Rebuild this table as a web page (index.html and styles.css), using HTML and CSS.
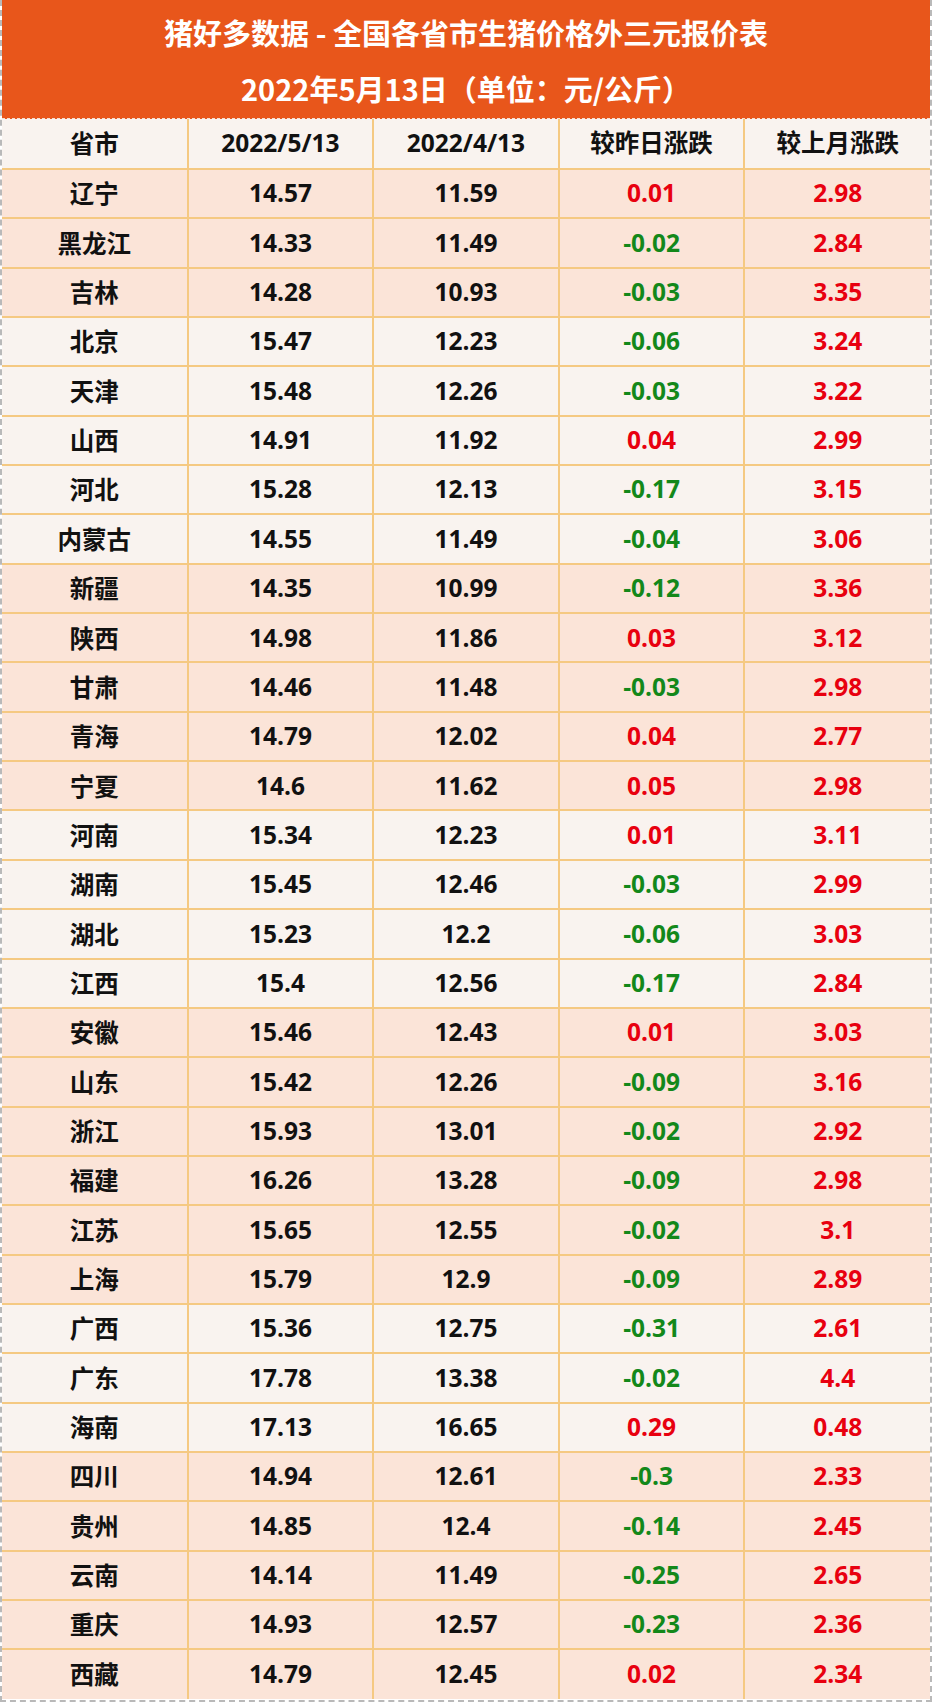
FILE: index.html
```html
<!DOCTYPE html>
<html lang="zh">
<head>
<meta charset="utf-8">
<title>猪好多数据</title>
<link rel="stylesheet" href="styles.css">
</head>
<body>
<div class="sheet">
  <div class="title">
    <div class="title-line">猪好多数据 - 全国各省市生猪价格外三元报价表</div>
    <div class="title-line">2022年5月13日（单位：元/公斤）</div>
  </div>
  <table class="grid">
    <thead>
      <tr class="head"><th>省市</th><th>2022/5/13</th><th>2022/4/13</th><th>较昨日涨跌</th><th>较上月涨跌</th></tr>
    </thead>
    <tbody>
      <tr class="pe"><td>辽宁</td><td>14.57</td><td>11.59</td><td class="up">0.01</td><td class="up">2.98</td></tr>
      <tr class="pe"><td>黑龙江</td><td>14.33</td><td>11.49</td><td class="dn">-0.02</td><td class="up">2.84</td></tr>
      <tr class="pe"><td>吉林</td><td>14.28</td><td>10.93</td><td class="dn">-0.03</td><td class="up">3.35</td></tr>
      <tr class="lt"><td>北京</td><td>15.47</td><td>12.23</td><td class="dn">-0.06</td><td class="up">3.24</td></tr>
      <tr class="lt"><td>天津</td><td>15.48</td><td>12.26</td><td class="dn">-0.03</td><td class="up">3.22</td></tr>
      <tr class="lt"><td>山西</td><td>14.91</td><td>11.92</td><td class="up">0.04</td><td class="up">2.99</td></tr>
      <tr class="lt"><td>河北</td><td>15.28</td><td>12.13</td><td class="dn">-0.17</td><td class="up">3.15</td></tr>
      <tr class="lt"><td>内蒙古</td><td>14.55</td><td>11.49</td><td class="dn">-0.04</td><td class="up">3.06</td></tr>
      <tr class="pe"><td>新疆</td><td>14.35</td><td>10.99</td><td class="dn">-0.12</td><td class="up">3.36</td></tr>
      <tr class="pe"><td>陕西</td><td>14.98</td><td>11.86</td><td class="up">0.03</td><td class="up">3.12</td></tr>
      <tr class="pe"><td>甘肃</td><td>14.46</td><td>11.48</td><td class="dn">-0.03</td><td class="up">2.98</td></tr>
      <tr class="pe"><td>青海</td><td>14.79</td><td>12.02</td><td class="up">0.04</td><td class="up">2.77</td></tr>
      <tr class="pe"><td>宁夏</td><td>14.6</td><td>11.62</td><td class="up">0.05</td><td class="up">2.98</td></tr>
      <tr class="lt"><td>河南</td><td>15.34</td><td>12.23</td><td class="up">0.01</td><td class="up">3.11</td></tr>
      <tr class="lt"><td>湖南</td><td>15.45</td><td>12.46</td><td class="dn">-0.03</td><td class="up">2.99</td></tr>
      <tr class="lt"><td>湖北</td><td>15.23</td><td>12.2</td><td class="dn">-0.06</td><td class="up">3.03</td></tr>
      <tr class="lt"><td>江西</td><td>15.4</td><td>12.56</td><td class="dn">-0.17</td><td class="up">2.84</td></tr>
      <tr class="pe"><td>安徽</td><td>15.46</td><td>12.43</td><td class="up">0.01</td><td class="up">3.03</td></tr>
      <tr class="pe"><td>山东</td><td>15.42</td><td>12.26</td><td class="dn">-0.09</td><td class="up">3.16</td></tr>
      <tr class="pe"><td>浙江</td><td>15.93</td><td>13.01</td><td class="dn">-0.02</td><td class="up">2.92</td></tr>
      <tr class="pe"><td>福建</td><td>16.26</td><td>13.28</td><td class="dn">-0.09</td><td class="up">2.98</td></tr>
      <tr class="pe"><td>江苏</td><td>15.65</td><td>12.55</td><td class="dn">-0.02</td><td class="up">3.1</td></tr>
      <tr class="pe"><td>上海</td><td>15.79</td><td>12.9</td><td class="dn">-0.09</td><td class="up">2.89</td></tr>
      <tr class="lt"><td>广西</td><td>15.36</td><td>12.75</td><td class="dn">-0.31</td><td class="up">2.61</td></tr>
      <tr class="lt"><td>广东</td><td>17.78</td><td>13.38</td><td class="dn">-0.02</td><td class="up">4.4</td></tr>
      <tr class="lt"><td>海南</td><td>17.13</td><td>16.65</td><td class="up">0.29</td><td class="up">0.48</td></tr>
      <tr class="pe"><td>四川</td><td>14.94</td><td>12.61</td><td class="dn">-0.3</td><td class="up">2.33</td></tr>
      <tr class="pe"><td>贵州</td><td>14.85</td><td>12.4</td><td class="dn">-0.14</td><td class="up">2.45</td></tr>
      <tr class="pe"><td>云南</td><td>14.14</td><td>11.49</td><td class="dn">-0.25</td><td class="up">2.65</td></tr>
      <tr class="pe"><td>重庆</td><td>14.93</td><td>12.57</td><td class="dn">-0.23</td><td class="up">2.36</td></tr>
      <tr class="pe"><td>西藏</td><td>14.79</td><td>12.45</td><td class="up">0.02</td><td class="up">2.34</td></tr>
    </tbody>
  </table>
</div>
</body>
</html>
```

FILE: styles.css
```css
html, body {
  margin: 0;
  padding: 0;
  background: #ffffff;
}

.sheet {
  width: 932px;
  height: 1702px;
  box-sizing: border-box;
  border-left: 2px dashed #b9b9b9;
  border-right: 2px dashed #b9b9b9;
  border-bottom: 2px dashed #b9b9b9;
  display: flex;
  flex-direction: column;
  font-family: "Open Sans", "Noto Sans CJK SC", sans-serif;
  font-weight: 700;
  color: #111111;
  overflow: hidden;
}

.title {
  height: 119px;
  flex: 0 0 auto;
  box-sizing: border-box;
  background: #e8561b;
  color: #ffffff;
  padding-top: 4px;
  border-bottom: 1px dashed #f3dfd4;
  font-family: "Noto Sans CJK SC", sans-serif;
}

.title-line {
  height: 56px;
  line-height: 56px;
  text-align: center;
  font-size: 29px;
  font-weight: 700;
}

.grid {
  flex: 0 0 auto;
  width: 100%;
  border-collapse: collapse;
  table-layout: fixed;
}

.grid tr.head {
  height: 50px;
}

.grid tbody tr {
  height: 49.35px;
}

.grid th,
.grid td {
  text-align: center;
  vertical-align: middle;
  padding: 0;
  font-size: 24.5px;
  font-weight: 700;
  border-left: 2px solid #f5c982;
  border-top: 2px solid #f5c982;
  line-height: 1;
}

.grid th:first-child,
.grid td:first-child {
  border-left: none;
}

.grid td:first-child,
.grid th:first-child {
  font-family: "Noto Sans CJK SC", sans-serif;
}

.head th {
  background: #f9f3ef;
  border-top: none;
}

.pe td {
  background: #fbe4d8;
}

.lt td {
  background: #f9f3ef;
}

.grid td.up {
  color: #e8000f;
}

.grid td.dn {
  color: #13881a;
}
```
